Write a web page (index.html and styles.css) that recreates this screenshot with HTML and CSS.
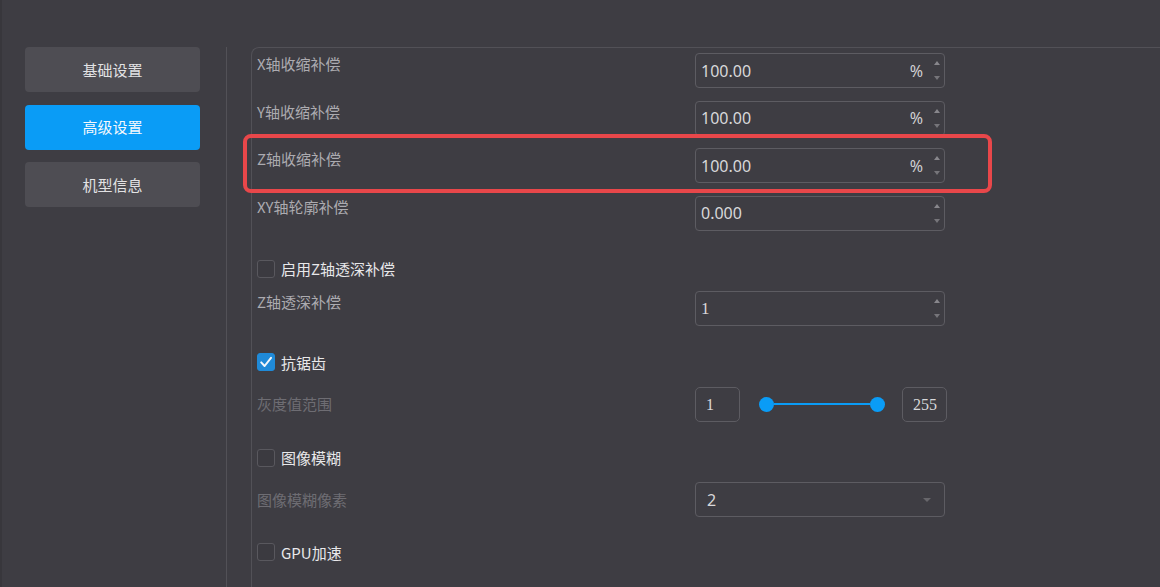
FILE: index.html
```html
<!DOCTYPE html>
<html lang="zh-CN">
<head>
    <meta charset="UTF-8">
    <meta name="viewport" content="width=device-width, initial-scale=1.0">
    <title>高级设置</title>
    <link rel="stylesheet" href="styles.css">
</head>
<body>
    <div class="app">
        <aside class="sidebar">
            <button class="nav-btn">基础设置</button>
            <button class="nav-btn active">高级设置</button>
            <button class="nav-btn">机型信息</button>
        </aside>
        <div class="divider"></div>
        <section class="panel">
            <div class="row">
                <span class="label">X轴收缩补偿</span>
                <div class="spin">
                    <span class="value">100.00</span>
                    <span class="unit">%</span>
                    <span class="arrows"><i class="up"></i><i class="down"></i></span>
                </div>
            </div>
            <div class="row">
                <span class="label">Y轴收缩补偿</span>
                <div class="spin">
                    <span class="value">100.00</span>
                    <span class="unit">%</span>
                    <span class="arrows"><i class="up"></i><i class="down"></i></span>
                </div>
            </div>
            <div class="row">
                <span class="label">Z轴收缩补偿</span>
                <div class="spin">
                    <span class="value">100.00</span>
                    <span class="unit">%</span>
                    <span class="arrows"><i class="up"></i><i class="down"></i></span>
                </div>
            </div>
            <div class="row">
                <span class="label">XY轴轮廓补偿</span>
                <div class="spin">
                    <span class="value">0.000</span>
                    <span class="arrows"><i class="up"></i><i class="down"></i></span>
                </div>
            </div>

            <label class="check first">
                <span class="box"></span>
                <span class="check-text">启用Z轴透深补偿</span>
            </label>
            <div class="row">
                <span class="label">Z轴透深补偿</span>
                <div class="spin">
                    <span class="value serif">1</span>
                    <span class="arrows"><i class="up"></i><i class="down"></i></span>
                </div>
            </div>

            <label class="check">
                <span class="box checked">
                    <svg width="14" height="14" viewBox="0 0 14 14"><polyline points="2.2,7.4 5.6,11 12,2.8" fill="none" stroke="#f2f6fa" stroke-width="2" stroke-linecap="round" stroke-linejoin="round"/></svg>
                </span>
                <span class="check-text">抗锯齿</span>
            </label>
            <div class="row centered">
                <span class="label disabled">灰度值范围</span>
                <div class="range-box">1</div>
                <div class="slider">
                    <span class="thumb"></span>
                    <span class="track"></span>
                    <span class="thumb"></span>
                </div>
                <div class="range-box">255</div>
            </div>

            <label class="check">
                <span class="box"></span>
                <span class="check-text">图像模糊</span>
            </label>
            <div class="row centered">
                <span class="label disabled">图像模糊像素</span>
                <div class="select">
                    <span class="value">2</span>
                    <i class="caret"></i>
                </div>
            </div>

            <label class="check last">
                <span class="box"></span>
                <span class="check-text">GPU加速</span>
            </label>
        </section>
        <div class="highlight"></div>
    </div>
</body>
</html>
```

FILE: styles.css
```css
* {
    box-sizing: border-box;
}
html, body {
    margin: 0;
    height: 100%;
    overflow: hidden;
}
body {
    font-family: "Noto Sans CJK SC", "Noto Sans", sans-serif;
    font-size: 15px;
    background-color: #3e3d43;
    color: #e4e4e6;
}
.app {
    position: relative;
    display: flex;
    height: 100%;
    padding-top: 47px;
    border-left: 2px solid #38373c;
}
.sidebar {
    display: flex;
    flex-direction: column;
    gap: 12.5px;
    width: 198px;
    padding-left: 23px;
    flex-shrink: 0;
}
.nav-btn {
    height: 45px;
    padding-bottom: 2px;
    border: none;
    border-radius: 4px;
    background-color: #4e4d53;
    color: #e2e2e4;
    font-family: inherit;
    font-size: 15px;
    cursor: pointer;
}
.nav-btn.active {
    background-color: #0a9cf6;
    color: #f4f8fc;
}
.divider {
    width: 1px;
    margin-left: 26px;
    background-color: #525157;
}
.panel {
    flex: 1;
    margin-left: 24px;
    padding: 5px 0 0 5px;
    border-top: 1px solid #525157;
    border-left: 1px solid #525157;
    border-top-left-radius: 8px;
}
.row {
    display: flex;
    align-items: flex-start;
    height: 35px;
    margin-bottom: 12.5px;
}
.row.centered {
    align-items: center;
}
.label {
    flex: 0 0 438px;
    padding-top: 1px;
    line-height: 20px;
    color: #acabb0;
}
.row.centered .label {
    padding-top: 0;
}
.label.disabled {
    color: #6e6d73;
}
.spin, .select {
    display: flex;
    align-items: center;
    width: 250px;
    height: 35px;
    padding-left: 5px;
    border: 1px solid #5d5c62;
    border-radius: 4px;
}
.value {
    flex: 1;
    font-family: "Noto Sans", sans-serif;
    font-size: 16px;
    color: #d8d8da;
}
.value.serif {
    font-family: "Liberation Serif", serif;
    font-size: 17px;
}
.unit {
    font-family: "Noto Sans", sans-serif;
    font-size: 16px;
    color: #d0d0d2;
    margin-right: 11px;
}
.arrows {
    display: flex;
    flex-direction: column;
    justify-content: space-between;
    height: 19px;
    margin-right: 4px;
}
.arrows i {
    width: 0;
    height: 0;
    border-left: 3.5px solid transparent;
    border-right: 3.5px solid transparent;
}
.arrows .up {
    border-bottom: 4px solid #88878c;
}
.arrows .down {
    border-top: 4px solid #76757a;
}
.select {
    padding-left: 11px;
}
.caret {
    width: 0;
    height: 0;
    margin-right: 13px;
    border-left: 4px solid transparent;
    border-right: 4px solid transparent;
    border-top: 4px solid #67666b;
}
.check {
    display: flex;
    align-items: center;
    gap: 6px;
    height: 20px;
    margin: 26px 0 14.5px;
    color: #e8e8ea;
}
.check.first {
    margin: 28px 0 12.5px;
}
.check.last {
    margin-top: 25px;
}
.box {
    display: flex;
    align-items: center;
    justify-content: center;
    width: 18px;
    height: 18px;
    border: 1px solid #59585e;
    border-radius: 3px;
    background-color: #3b3a40;
}
.box.checked {
    border-color: #1f8ad8;
    background-color: #1f8ad8;
}
.range-box {
    width: 45px;
    height: 35px;
    padding-left: 10px;
    border: 1px solid #5d5c62;
    border-radius: 5px;
    font-family: "Liberation Serif", serif;
    font-size: 16px;
    line-height: 33px;
    color: #d8d8da;
}
.slider {
    display: flex;
    align-items: center;
    width: 162px;
    padding: 0 17.5px 0 18.5px;
}
.thumb {
    width: 15px;
    height: 15px;
    border-radius: 50%;
    background-color: #0a9cf6;
    flex-shrink: 0;
}
.track {
    flex: 1;
    height: 2px;
    background-color: #0a9cf6;
}
.highlight {
    position: absolute;
    left: 241px;
    top: 134px;
    width: 749px;
    height: 59px;
    border: 4px solid #e8474a;
    border-radius: 8px;
    pointer-events: none;
}
```
